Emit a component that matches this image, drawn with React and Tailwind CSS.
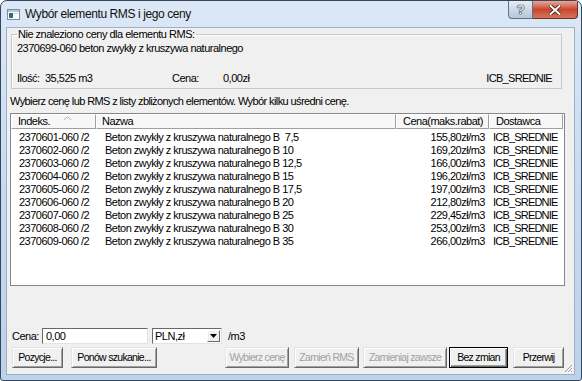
import React from 'react';
import clsx from 'clsx';

// wiersze listy cen
const rows = [
  ['2370601-060 /2', 'Beton zwykły z kruszywa naturalnego B  7,5', '155,80zł/m3'],
  ['2370602-060 /2', 'Beton zwykły z kruszywa naturalnego B 10', '169,20zł/m3'],
  ['2370603-060 /2', 'Beton zwykły z kruszywa naturalnego B 12,5', '166,00zł/m3'],
  ['2370604-060 /2', 'Beton zwykły z kruszywa naturalnego B 15', '196,20zł/m3'],
  ['2370605-060 /2', 'Beton zwykły z kruszywa naturalnego B 17,5', '197,00zł/m3'],
  ['2370606-060 /2', 'Beton zwykły z kruszywa naturalnego B 20', '212,80zł/m3'],
  ['2370607-060 /2', 'Beton zwykły z kruszywa naturalnego B 25', '229,45zł/m3'],
  ['2370608-060 /2', 'Beton zwykły z kruszywa naturalnego B 30', '253,00zł/m3'],
  ['2370609-060 /2', 'Beton zwykły z kruszywa naturalnego B 35', '266,00zł/m3'],
];

function Btn({ children, className, disabled, isDefault }) {
  return (
    <button
      className={clsx(
        'h-[21px] flex items-center justify-center bg-[#f0f0f0] border leading-none whitespace-nowrap text-[10.5px] tracking-[-0.7px]',
        isDefault
          ? 'border-black shadow-[inset_1px_1px_0_#fff,inset_-1px_-1px_0_#696969,inset_-2px_-2px_0_#a0a0a0]'
          : 'border-t-[#e3e3e3] border-l-[#e3e3e3] border-r-[#696969] border-b-[#696969] shadow-[inset_1px_1px_0_#fff,inset_-1px_-1px_0_#a0a0a0]',
        disabled ? 'text-[#a0a0a0]' : 'text-black',
        className
      )}
    >
      {children}
    </button>
  );
}

function HeaderCell({ children, className }) {
  return (
    <div
      className={clsx(
        'h-[15px] flex items-center border-t border-l border-t-white border-l-white border-r border-b border-r-[#a0a0a0] border-b-[#a0a0a0] bg-[#f7f7f7]',
        className
      )}
    >
      {children}
    </div>
  );
}

export default function App() {
  return (
    <div className="w-[582px] h-[381px] bg-white font-['Liberation_Sans',Arial,sans-serif] text-[11px] tracking-[-0.5px] text-black">
      <div className="w-full h-full flex flex-col border border-[#34475e] rounded-t-[7px] rounded-b-[3px] bg-gradient-to-b from-[#dce8f6] via-[#c7daf0] to-[#bcd2eb] overflow-hidden">

        {/* pasek tytułu */}
        <div className="h-[27px] flex items-start shrink-0">
          <div className="flex items-center h-[26px] pl-[6px]">
            <svg width="13" height="11" viewBox="0 0 13 11">
              <rect x="0.5" y="0.5" width="12" height="10" fill="#fdfdfd" stroke="#7d8ea4" />
              <rect x="1" y="1" width="11" height="2" fill="#b7c8dc" />
              <rect x="2" y="4" width="4" height="5" fill="#2a6f7e" />
              <rect x="7" y="4" width="4" height="1" fill="#c9d3de" />
            </svg>
            <span className="ml-[5px] text-[12px] tracking-[-0.4px] text-[#111]">Wybór elementu RMS i jego ceny</span>
          </div>
          <div className="ml-auto mr-[3px] flex">
            <div className="w-[25px] h-[18px] flex items-center justify-center rounded-bl-[4px] border border-t-0 border-[#5f7188] bg-gradient-to-b from-[#e6edf5] via-[#cdd9e7] to-[#b4c6da]">
              <span className="font-bold text-[13px] text-[#dfe6ee] [text-shadow:0_0_1px_#1e2a38,0_0_1px_#1e2a38,0_0_1px_#1e2a38]">?</span>
            </div>
            <div className="w-[45px] h-[18px] flex items-center justify-center rounded-br-[4px] border border-l-0 border-t-0 border-[#6b3026] bg-gradient-to-b from-[#e9a799] via-[#c9452f] to-[#d8735b]">
              <svg width="12" height="10" viewBox="0 0 12 10">
                <path d="M1.5 1 L10.5 9 M10.5 1 L1.5 9" stroke="#3d1d18" strokeWidth="3.6" strokeLinecap="square" />
                <path d="M1.5 1 L10.5 9 M10.5 1 L1.5 9" stroke="#ffffff" strokeWidth="2" strokeLinecap="square" />
              </svg>
            </div>
          </div>
        </div>

        {/* obszar klienta */}
        <div className="relative flex-1 flex flex-col ml-[6px] mr-[7px] mb-[6px] bg-[#f0f0f0] shadow-[0_0_0_1px_#9db0c8]">
          <fieldset className="ml-[4px] mr-[12px] border border-[#c7c7c7] pl-[5px] pr-[9px] pb-[3px] shadow-[inset_1px_1px_0_#fff]">
            <legend className="px-[1px] leading-[12px]">Nie znaleziono ceny dla elementu RMS:</legend>
            <div className="mt-[2px] leading-[13px]">2370699-060 beton zwykły z kruszywa naturalnego</div>
            <div className="mt-[17px] leading-[13px] flex">
              <span className="w-[28px]">Ilość:</span>
              <span className="w-[127px]">35,525 m3</span>
              <span className="w-[51px]">Cena:</span>
              <span>0,00zł</span>
              <span className="ml-auto tracking-[-0.7px]">ICB_SREDNIE</span>
            </div>
          </fieldset>

          <div className="mt-[6px] ml-[3px] leading-[13px] tracking-[-0.6px]">
            Wybierz cenę lub RMS z listy zbliżonych elementów. Wybór kilku uśredni cenę.
          </div>

          {/* lista */}
          <div className="mt-[5px] ml-[3px] mr-[9px] h-[173px] bg-white border border-[#828790] overflow-hidden">
            <div className="flex">
              <HeaderCell className="w-[85px] pl-[6px]">
                <span>Indeks.</span>
                <svg className="ml-[13px] -mt-[6px]" width="9" height="5" viewBox="0 0 9 5">
                  <path d="M0.5 4 L4.5 0.8 L8.5 4" fill="none" stroke="#a9b3be" strokeWidth="1" />
                </svg>
              </HeaderCell>
              <HeaderCell className="w-[300px] pl-[5px]">Nazwa</HeaderCell>
              <HeaderCell className="w-[93px] justify-end pr-[5px]">Cena(maks.rabat)</HeaderCell>
              <HeaderCell className="w-[74px] pl-[6px]">Dostawca</HeaderCell>
            </div>
            <div className="pt-[2px]">
              {rows.map((r) => (
                <div key={r[0]} className="flex h-[13px] leading-[13px] whitespace-pre">
                  <div className="w-[85px] pl-[8px]">{r[0]}</div>
                  <div className="w-[300px] pl-[9px]">{r[1]}</div>
                  <div className="w-[93px] text-right pr-[4px]">{r[2]}</div>
                  <div className="w-[74px] pl-[4px] tracking-[-0.8px]">ICB_SREDNIE</div>
                </div>
              ))}
            </div>
          </div>

          {/* cena */}
          <div className="mt-[42px] ml-[5px] h-[16px] flex items-center">
            <span className="w-[30px]">Cena:</span>
            <div className="w-[106px] h-[16px] flex items-center pl-[3px] bg-white border border-t-[#696969] border-l-[#696969] border-r-[#e3e3e3] border-b-[#e3e3e3]">
              0,00
            </div>
            <div className="ml-[4px] w-[70px] h-[16px] flex items-center bg-white border border-t-[#696969] border-l-[#696969] border-r-[#e3e3e3] border-b-[#e3e3e3]">
              <span className="pl-[2px] flex-1">PLN,zł</span>
              <div className="w-[13px] h-[12px] mr-[1px] flex items-center justify-center bg-[#f0f0f0] border border-t-white border-l-white border-r-[#696969] border-b-[#696969]">
                <svg width="7" height="4" viewBox="0 0 7 4">
                  <path d="M0 0 H7 L3.5 4 Z" fill="#000" />
                </svg>
              </div>
            </div>
            <span className="ml-[6px]">/m3</span>
          </div>

          {/* przyciski */}
          <div className="mt-[3px] ml-[5px] mr-[10px] flex">
            <Btn className="w-[51px]">Pozycje...</Btn>
            <Btn className="w-[86px] ml-[8px]">Ponów szukanie...</Btn>
            <div className="ml-auto flex">
              <Btn className="w-[64px]" disabled>Wybierz cenę</Btn>
              <Btn className="w-[65px] ml-[5px]" disabled>Zamień RMS</Btn>
              <Btn className="w-[84px] ml-[4px]" disabled>Zamieniaj zawsze</Btn>
              <Btn className="w-[59px] ml-[2px]" isDefault>Bez zmian</Btn>
              <Btn className="w-[51px] ml-[5px]">Przerwij</Btn>
            </div>
          </div>

          {/* uchwyt zmiany rozmiaru */}
          <svg className="absolute right-[1px] bottom-[1px]" width="10" height="10" viewBox="0 0 10 10">
            <path d="M9 2 L2 9 M9 5 L5 9 M9 8 L8 9" stroke="#a0a0a0" strokeWidth="1" />
            <path d="M10 3 L3 10 M10 6 L6 10" stroke="#ffffff" strokeWidth="1" />
          </svg>
        </div>
      </div>
    </div>
  );
}
